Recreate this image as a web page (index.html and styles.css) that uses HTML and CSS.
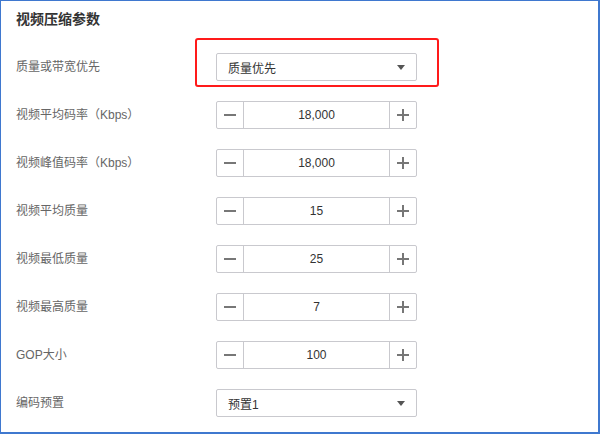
FILE: index.html
```html
<!DOCTYPE html>
<html lang="zh-CN">
<head>
<meta charset="utf-8">
<link rel="stylesheet" href="styles.css">
</head>
<body>
<div class="frame">
  <h2 class="title">视频压缩参数</h2>
  <div class="form">
    <div class="label">质量或带宽优先</div>
    <div class="ctrl highlight-wrap">
      <div class="select"><span>质量优先</span><i class="caret"></i></div>
      <div class="highlight"></div>
    </div>

    <div class="label">视频平均码率（Kbps）</div>
    <div class="ctrl stepper"><span class="btn minus"></span><span class="val">18,000</span><span class="btn plus"></span></div>

    <div class="label">视频峰值码率（Kbps）</div>
    <div class="ctrl stepper"><span class="btn minus"></span><span class="val">18,000</span><span class="btn plus"></span></div>

    <div class="label">视频平均质量</div>
    <div class="ctrl stepper"><span class="btn minus"></span><span class="val">15</span><span class="btn plus"></span></div>

    <div class="label">视频最低质量</div>
    <div class="ctrl stepper"><span class="btn minus"></span><span class="val">25</span><span class="btn plus"></span></div>

    <div class="label">视频最高质量</div>
    <div class="ctrl stepper"><span class="btn minus"></span><span class="val">7</span><span class="btn plus"></span></div>

    <div class="label">GOP大小</div>
    <div class="ctrl stepper"><span class="btn minus"></span><span class="val">100</span><span class="btn plus"></span></div>

    <div class="label">编码预置</div>
    <div class="ctrl"><div class="select"><span>预置1</span><i class="caret"></i></div></div>
  </div>
</div>
</body>
</html>
```

FILE: styles.css
```css
html, body {
  margin: 0;
  padding: 0;
  background: #fff;
}
body {
  font-family: "Liberation Sans", "Noto Sans CJK SC", sans-serif;
}
.frame {
  width: 600px;
  height: 434px;
  box-sizing: border-box;
  border: 1px solid #3f78cf;
  border-right-width: 2px;
  border-bottom-width: 2px;
  padding: 8px 0 0 15px;
}
.title {
  margin: 0 0 24px;
  font-size: 14px;
  line-height: 20px;
  font-weight: bold;
  color: #333;
}
.form {
  display: grid;
  grid-template-columns: 200px 201px;
  grid-auto-rows: 28px;
  row-gap: 20px;
}
.label {
  font-size: 12px;
  color: #666;
  line-height: 28px;
  white-space: nowrap;
}
.ctrl {
  box-sizing: border-box;
  height: 28px;
}
.highlight-wrap {
  position: relative;
}
.highlight {
  position: absolute;
  top: -15px;
  left: -21px;
  right: -22px;
  bottom: -6px;
  border: 2px solid #ff1a1a;
  border-radius: 3px;
  pointer-events: none;
}
.select {
  box-sizing: border-box;
  height: 28px;
  border: 1px solid #c9c9ce;
  border-radius: 2px;
  display: flex;
  align-items: center;
  justify-content: space-between;
  padding: 0 11px 0 11px;
  font-size: 12px;
  color: #333;
}
.caret {
  width: 0;
  height: 0;
  border-left: 4px solid transparent;
  border-right: 4px solid transparent;
  border-top: 5px solid #555;
}
.stepper {
  display: flex;
  border: 1px solid #c9c9ce;
  border-radius: 2px;
}
.btn {
  width: 26px;
  position: relative;
  flex: none;
}
.minus {
  border-right: 1px solid #c9c9ce;
}
.plus {
  border-left: 1px solid #c9c9ce;
}
.btn::before, .plus::after {
  content: "";
  position: absolute;
  background: #777;
  left: 7px;
  top: 12px;
  width: 12px;
  height: 2px;
}
.plus::before {
  left: 7px;
}
.plus::after {
  left: 12px;
  top: 7px;
  width: 2px;
  height: 12px;
}
.val {
  flex: 1;
  text-align: center;
  font-size: 12px;
  line-height: 26px;
  color: #333;
}
```
